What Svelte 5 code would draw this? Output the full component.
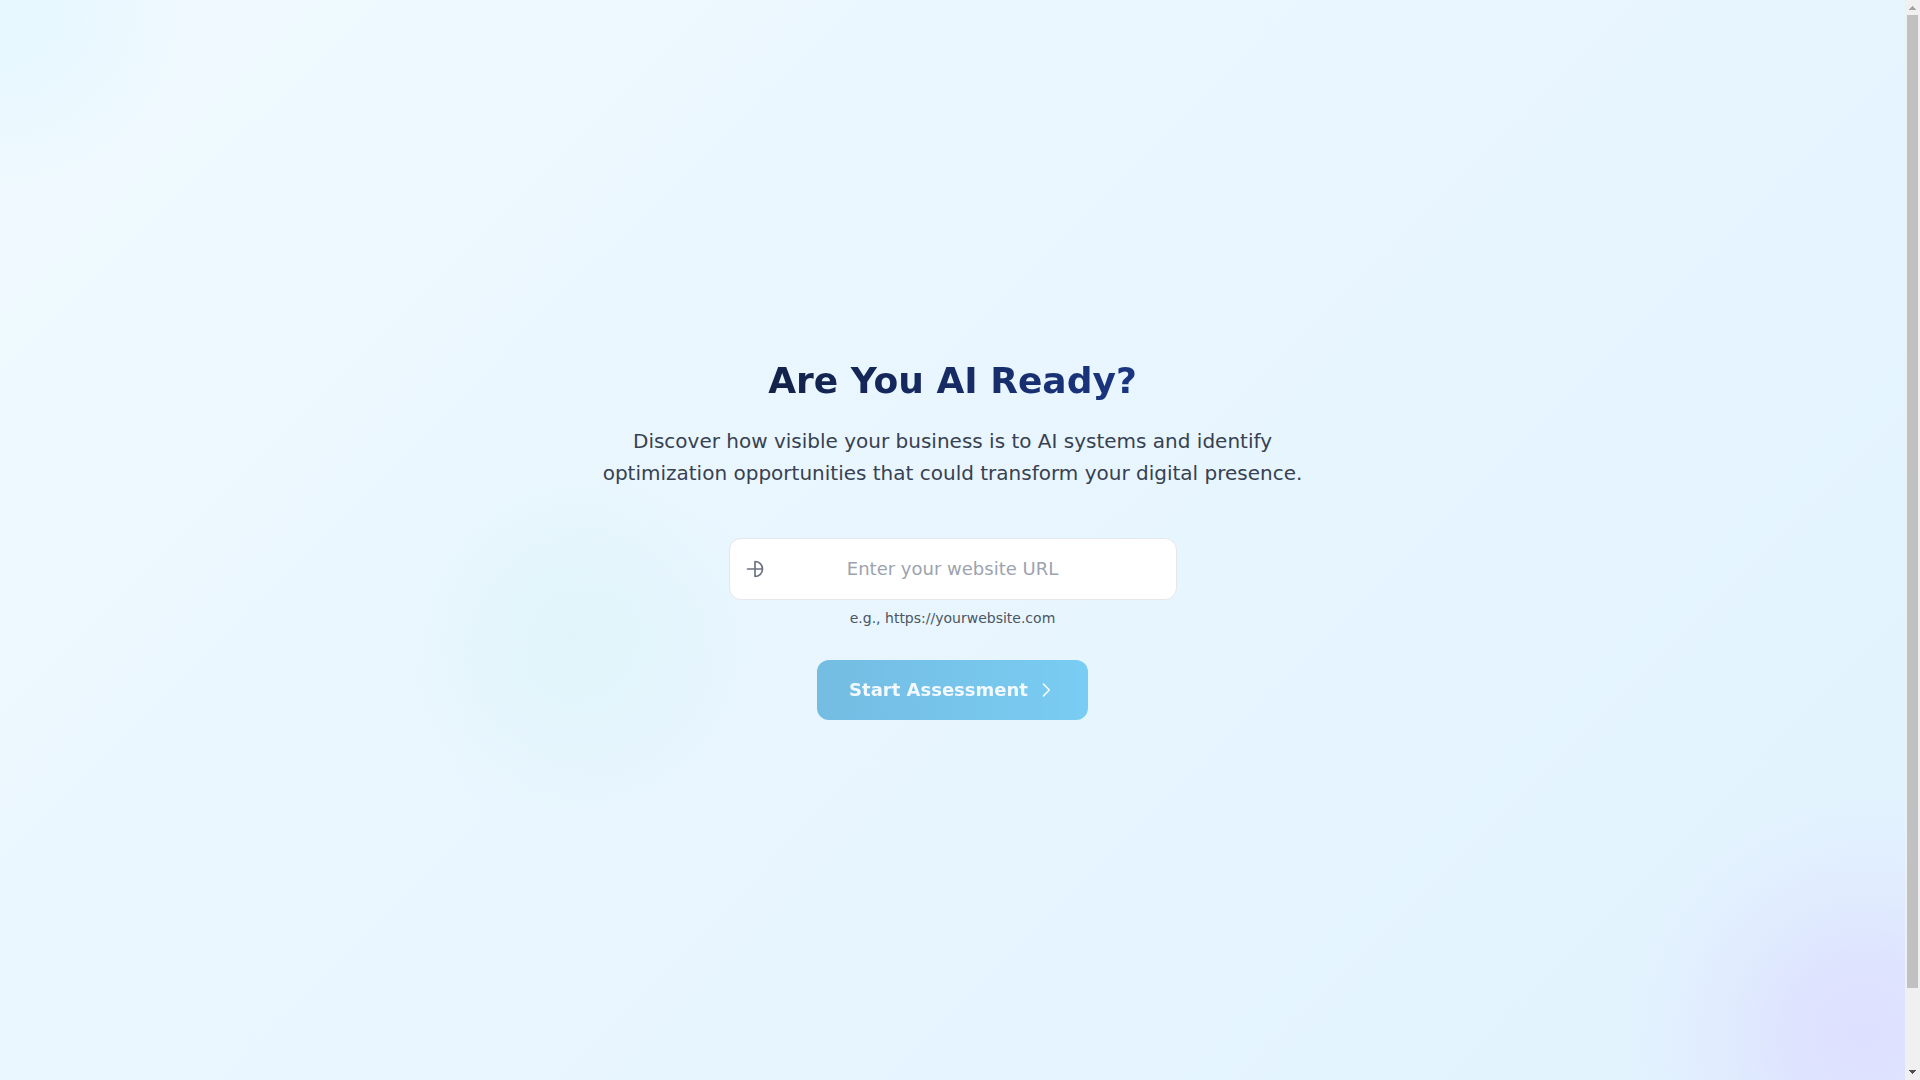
<script lang="ts">
    let url = "";

    $: canStart = url.trim().length > 0;

    const handleSubmit = (event: any) => {
        event.preventDefault();
    };
</script>

<div class="page">
    <main class="hero">
        <div class="blob blob-sky"></div>
        <div class="blob blob-violet"></div>
        <div class="blob blob-teal"></div>

        <div class="content">
            <h1>Are You AI Ready?</h1>
            <p class="lead">
                Discover how visible your business is to AI systems and identify optimization
                opportunities that could transform your digital presence.
            </p>

            <form on:submit={handleSubmit}>
                <div class="field">
                    <svg class="field-icon" viewBox="0 0 24 24" aria-hidden="true">
                        <path d="M12 21a9 9 0 0 0 0-18v18M3 12h18" />
                    </svg>
                    <input
                        id="website"
                        type="text"
                        placeholder="Enter your website URL"
                        aria-describedby="website-hint"
                        aria-label="Website URL"
                        bind:value={url}
                    />
                </div>
                <label class="hint" id="website-hint" for="website">e.g., https://yourwebsite.com</label>

                <button class="start-btn" type="submit" disabled={!canStart}>
                    Start Assessment
                    <svg viewBox="0 0 24 24" aria-hidden="true">
                        <path d="M9 5l7 7-7 7" />
                    </svg>
                </button>
            </form>
        </div>
    </main>

    <div class="scrollbar" aria-hidden="true">
        <svg class="arrow up" viewBox="0 0 7 4"><path d="M3 0h1v1h1v1h1v1h1v1H0V3h1V2h1V1h1z" /></svg>
        <div class="track"><div class="thumb"></div></div>
        <svg class="arrow" viewBox="0 0 7 4"><path d="M0 0h7v1H6v1H5v1H4v1H3V3H2V2H1V1H0z" /></svg>
    </div>
</div>

<style>
    :global(body) {
        margin: 0;
        font-family: "DejaVu Sans", sans-serif;
    }

    .page {
        display: flex;
        height: 100vh;
        overflow: hidden;
    }

    .hero {
        position: relative;
        flex: 1;
        display: flex;
        align-items: center;
        justify-content: center;
        overflow: hidden;
        background: linear-gradient(135deg, #f0f9ff 0%, #e0f2fe 104%);
    }

    /* Soft colour spots behind the form */
    .blob {
        position: absolute;
        border-radius: 50%;
    }

    .blob-sky {
        top: -192px;
        left: -192px;
        width: 384px;
        height: 384px;
        background: radial-gradient(circle closest-side, rgba(224, 247, 255, 0.6) 20%, rgba(224, 247, 255, 0) 100%);
    }

    .blob-violet {
        right: -200px;
        bottom: -195px;
        width: 480px;
        height: 480px;
        background: radial-gradient(
            circle closest-side,
            rgba(221, 223, 255, 0.95) 0%,
            rgba(221, 223, 255, 0.8) 30%,
            rgba(221, 223, 255, 0.35) 60%,
            rgba(221, 223, 255, 0) 100%
        );
    }

    .blob-teal {
        top: 435px;
        left: 30%;
        width: 400px;
        height: 400px;
        transform: translateX(-50%);
        background: radial-gradient(
            circle closest-side,
            rgba(204, 241, 240, 0.32) 0%,
            rgba(204, 241, 240, 0.24) 30%,
            rgba(204, 241, 240, 0.1) 65%,
            rgba(204, 241, 240, 0) 100%
        );
    }

    .content {
        position: relative;
        width: 100%;
        max-width: 768px;
        text-align: center;
    }

    h1 {
        margin: 0 0 24px;
        font-size: 36px;
        line-height: 40px;
        font-weight: 700;
        color: transparent;
        background: linear-gradient(90deg, #0f172a, #1e40a0);
        background-clip: text;
        -webkit-background-clip: text;
    }

    .lead {
        max-width: 720px;
        margin: 0 auto 49px;
        font-size: 20px;
        line-height: 32px;
        color: #374151;
    }

    form {
        display: flex;
        flex-direction: column;
        align-items: center;
    }

    .field {
        position: relative;
        width: 100%;
        max-width: 448px;
    }

    .field-icon {
        position: absolute;
        top: 50%;
        left: 16px;
        width: 20px;
        height: 20px;
        transform: translateY(-50%);
        fill: none;
        stroke: #6b7280;
        stroke-width: 2;
        stroke-linecap: round;
        stroke-linejoin: round;
    }

    input {
        display: block;
        box-sizing: border-box;
        width: 100%;
        height: 62px;
        padding: 16px 48px;
        border: 1px solid #e5e7eb;
        border-radius: 12px;
        background: white;
        font-family: inherit;
        font-size: 18px;
        text-align: center;
        color: #111827;
    }

    input::placeholder {
        color: #9ca3af;
        opacity: 1;
    }

    .hint {
        margin: 8px 0 32px;
        font-size: 14px;
        line-height: 20px;
        color: #4b5563;
    }

    .start-btn {
        display: flex;
        align-items: center;
        gap: 8px;
        padding: 16px 32px;
        border: none;
        border-radius: 12px;
        background: linear-gradient(90deg, #0284c7, #0ea5e9);
        font-family: inherit;
        font-size: 18px;
        font-weight: 600;
        line-height: 28px;
        color: white;
        cursor: pointer;
    }

    .start-btn:disabled {
        opacity: 0.5;
        cursor: not-allowed;
    }

    .start-btn svg {
        width: 20px;
        height: 20px;
        fill: none;
        stroke: white;
        stroke-width: 2;
        stroke-linecap: round;
        stroke-linejoin: round;
    }

    .scrollbar {
        display: flex;
        flex-direction: column;
        align-items: center;
        box-sizing: border-box;
        width: 15px;
        padding: 6px 0;
        background: #f0f0f0;
    }

    .arrow {
        width: 7px;
        height: 4px;
        fill: #505050;
    }

    .arrow.up {
        fill: #a3a3a3;
    }

    .track {
        flex: 1;
        align-self: stretch;
        margin: 5px 2px;
    }

    .thumb {
        height: 92.7%;
        background: #c1c1c1;
    }
</style>
